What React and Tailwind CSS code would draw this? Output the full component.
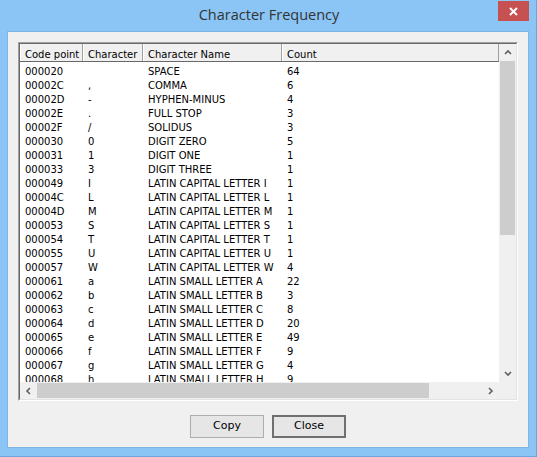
import React from "react";

const rows = [
  ["000020", "", "SPACE", "64"],
  ["00002C", ",", "COMMA", "6"],
  ["00002D", "-", "HYPHEN-MINUS", "4"],
  ["00002E", ".", "FULL STOP", "3"],
  ["00002F", "/", "SOLIDUS", "3"],
  ["000030", "0", "DIGIT ZERO", "5"],
  ["000031", "1", "DIGIT ONE", "1"],
  ["000033", "3", "DIGIT THREE", "1"],
  ["000049", "I", "LATIN CAPITAL LETTER I", "1"],
  ["00004C", "L", "LATIN CAPITAL LETTER L", "1"],
  ["00004D", "M", "LATIN CAPITAL LETTER M", "1"],
  ["000053", "S", "LATIN CAPITAL LETTER S", "1"],
  ["000054", "T", "LATIN CAPITAL LETTER T", "1"],
  ["000055", "U", "LATIN CAPITAL LETTER U", "1"],
  ["000057", "W", "LATIN CAPITAL LETTER W", "4"],
  ["000061", "a", "LATIN SMALL LETTER A", "22"],
  ["000062", "b", "LATIN SMALL LETTER B", "3"],
  ["000063", "c", "LATIN SMALL LETTER C", "8"],
  ["000064", "d", "LATIN SMALL LETTER D", "20"],
  ["000065", "e", "LATIN SMALL LETTER E", "49"],
  ["000066", "f", "LATIN SMALL LETTER F", "9"],
  ["000067", "g", "LATIN SMALL LETTER G", "4"],
  ["000068", "h", "LATIN SMALL LETTER H", "9"],
];

const cols = ["w-[63px]", "w-[60px]", "w-[139px]", "flex-1"];
const headers = ["Code point", "Character", "Character Name", "Count"];

// little scrollbar chevrons
const Arrow = ({ dir }) => {
  const d = {
    up: "M1 5 L4 2 L7 5",
    down: "M1 2 L4 5 L7 2",
    left: "M5 1 L2 4 L5 7",
    right: "M2 1 L5 4 L2 7",
  }[dir];
  const vertical = dir === "up" || dir === "down";
  return (
    <svg width={vertical ? 8 : 7} height={vertical ? 7 : 8} viewBox={vertical ? "0 0 8 7" : "0 0 7 8"}>
      <path d={d} fill="none" stroke="#606060" strokeWidth="1.6" />
    </svg>
  );
};

const Button = ({ label, isDefault }) => (
  <button
    className={`w-[74px] h-[23px] bg-[#e6e6e6] text-black text-[11px] font-normal ${
      isDefault ? "border-2 border-[#707070]" : "border border-[#adadad]"
    }`}
    style={{ fontFamily: '"DejaVu Sans", sans-serif' }}
  >
    {label}
  </button>
);

export default function App() {
  return (
    <div
      className="w-[537px] h-[457px] flex flex-col bg-[#8bc5f6] border-b border-r border-[#6aa6dc] overflow-hidden"
      style={{ fontFamily: '"DejaVu Sans", "Liberation Sans", sans-serif' }}
    >
      {/* Title bar */}
      <div className="relative h-[31px] shrink-0 flex items-center justify-center">
        <span
          className="text-[14.5px] text-[#333333] -mt-[1px] pl-[2px]"
          style={{ fontFamily: '"Open Sans", "Noto Sans", sans-serif' }}
        >
          Character Frequency
        </span>
        <div className="absolute right-[7px] top-[1px] w-[31px] h-[20px] bg-[#c75050] flex items-center justify-center">
          <svg width="9" height="9" viewBox="0 0 9 9">
            <path d="M1 1 L8 8 M8 1 L1 8" stroke="#fff" strokeWidth="2" />
          </svg>
        </div>
      </div>

      {/* Client area */}
      <div className="flex-1 mx-[7px] mb-[8px] bg-[#f0f0f0] border border-[#7fb3e2] flex flex-col pt-[10px] px-[10px]">
        {/* List view, sunken */}
        <div className="w-[500px] h-[359px] border border-t-[#a0a0a0] border-l-[#a0a0a0] border-r-white border-b-white">
          <div className="w-full h-full border border-t-[#696969] border-l-[#696969] border-r-[#e3e3e3] border-b-[#e3e3e3] grid grid-cols-[1fr_17px] grid-rows-[1fr_17px] bg-white">
            {/* Items */}
            <div className="flex flex-col overflow-hidden text-[10px] text-black">
              <div className="h-[18px] shrink-0 flex bg-[#f0f0f0] border-b border-[#696969]">
                {headers.map((h, i) => (
                  <div
                    key={h}
                    className={`${cols[i]} h-full flex items-center pt-[3px] pl-[4px] border-l border-l-white border-r border-r-[#a0a0a0] whitespace-nowrap`}
                  >
                    {h}
                  </div>
                ))}
              </div>
              <div className="flex flex-col pt-[3px]">
                {rows.map((r) => (
                  <div key={r[0]} className="h-[14px] shrink-0 flex items-center leading-[14px]">
                    {r.map((c, i) => (
                      <div key={i} className={`${cols[i]} pl-[5px] whitespace-nowrap`}>
                        {c}
                      </div>
                    ))}
                  </div>
                ))}
              </div>
            </div>

            {/* Vertical scrollbar */}
            <div className="bg-[#f0f0f0] flex flex-col">
              <div className="h-[17px] flex items-center justify-center">
                <Arrow dir="up" />
              </div>
              <div className="mx-[1px] h-[174px] bg-[#cdcdcd]" />
              <div className="flex-1" />
              <div className="h-[17px] flex items-center justify-center">
                <Arrow dir="down" />
              </div>
            </div>

            {/* Horizontal scrollbar */}
            <div className="bg-[#f0f0f0] flex">
              <div className="w-[17px] flex items-center justify-center">
                <Arrow dir="left" />
              </div>
              <div className="my-[1px] w-[392px] bg-[#cdcdcd]" />
              <div className="flex-1" />
              <div className="w-[17px] flex items-center justify-center">
                <Arrow dir="right" />
              </div>
            </div>
            <div className="bg-[#f0f0f0]" />
          </div>
        </div>

        {/* Buttons */}
        <div className="flex justify-center gap-[8px] mt-[14px]">
          <Button label="Copy" />
          <Button label="Close" isDefault />
        </div>
      </div>
    </div>
  );
}
